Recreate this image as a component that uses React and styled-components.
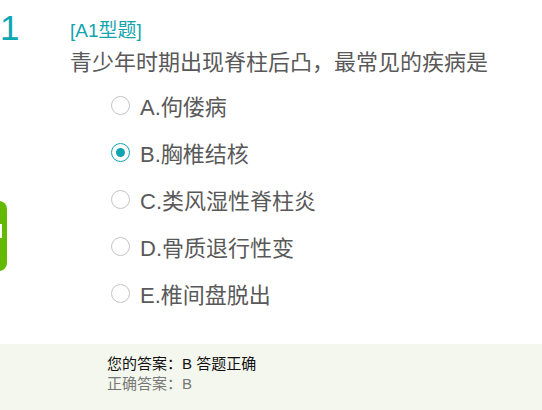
import React from "react";
import styled, { createGlobalStyle } from "styled-components";

const Global = createGlobalStyle`
  html, body { margin: 0; padding: 0; background: #fff; }
  body { font-family: "Liberation Sans", "Noto Sans CJK SC", sans-serif; overflow: hidden; }
`;

const Page = styled.div`
  position: relative;
  width: 542px;
  height: 410px;
  overflow: hidden;
`;

const Question = styled.div`
  display: flex;
  padding-top: 10px;
`;

const Num = styled.div`
  width: 70px;
  font-size: 35px;
  line-height: 36px;
  color: #0aa6b2;
`;

const Body = styled.div`
  flex: 1;
`;

const Type = styled.div`
  font-size: 19px;
  line-height: 24px;
  color: #12a5b0;
  margin-top: 9px;
`;

const Title = styled.div`
  font-size: 22px;
  line-height: 28px;
  color: #595959;
  margin-top: 6px;
`;

const Options = styled.div`
  display: flex;
  flex-direction: column;
  gap: 17px;
  margin-top: 13px;
  margin-left: 41px;
`;

const Option = styled.label`
  display: flex;
  align-items: center;
  gap: 10px;
  height: 30px;
  font-size: 22px;
  color: #595959;
`;

const Radio = styled.span`
  box-sizing: border-box;
  width: 19px;
  height: 19px;
  border-radius: 50%;
  border: 1.5px solid ${p => (p.$checked ? "#10a4b0" : "#c4c4c4")};
  display: flex;
  align-items: center;
  justify-content: center;
  &::after {
    content: "";
    display: ${p => (p.$checked ? "block" : "none")};
    width: 9px;
    height: 9px;
    border-radius: 50%;
    background: #10a4b0;
  }
`;

const Result = styled.div`
  margin-top: 36px;
  background: #f4f7ee;
  padding: 10px 0 20px 107px;
  font-size: 15px;
  line-height: 20px;
`;

const Mine = styled.div`
  color: #111;
`;

const Right = styled.div`
  color: #777;
`;

const SideTab = styled.div`
  position: absolute;
  left: -60px;
  top: 201px;
  width: 67px;
  height: 70px;
  border-radius: 8px;
  background: #62b900;
  &::after {
    content: "";
    position: absolute;
    right: 5px;
    top: 23px;
    width: 2px;
    height: 14px;
    background: #fff;
  }
`;

const options = [
  { key: "A", text: "A.佝偻病" },
  { key: "B", text: "B.胸椎结核", checked: true },
  { key: "C", text: "C.类风湿性脊柱炎" },
  { key: "D", text: "D.骨质退行性变" },
  { key: "E", text: "E.椎间盘脱出" },
];

export default function App() {
  return (
    <Page>
      <Global />
      <Question>
        <Num>1</Num>
        <Body>
          <Type>[A1型题]</Type>
          <Title>青少年时期出现脊柱后凸，最常见的疾病是</Title>
          <Options>
            {options.map(o => (
              <Option key={o.key}>
                <Radio $checked={o.checked} />
                {o.text}
              </Option>
            ))}
          </Options>
        </Body>
      </Question>
      <Result>
        <Mine>您的答案：B 答题正确</Mine>
        <Right>正确答案：B</Right>
      </Result>
      <SideTab />
    </Page>
  );
}
